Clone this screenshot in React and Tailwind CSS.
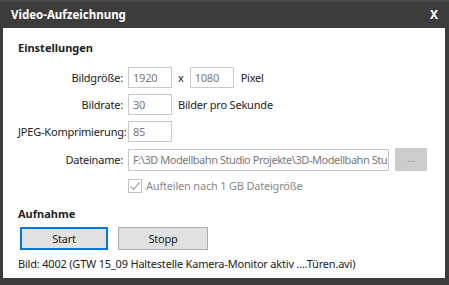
import React from "react";

const font = { fontFamily: '"Noto Sans", "Open Sans", sans-serif' };

function Input({ value, className = "" }) {
  return (
    <div
      className={`h-[21px] border border-[#c9c9c9] bg-white flex items-center pl-[4px] text-[#7a7a7a] overflow-hidden whitespace-nowrap ${className}`}
    >
      {value}
    </div>
  );
}

export default function App() {
  return (
    <div
      className="w-[449px] h-[285px] bg-[#3c3c3c] flex flex-col text-[11px] leading-[16px] tracking-[-0.2px]"
      style={font}
    >
      <div className="h-[2px] bg-[#4a4a4a]" />
      <div className="h-[26px] flex items-center justify-between pl-[11px] pr-[11px] text-white font-bold text-[11.5px] tracking-normal">
        <span>Video-Aufzeichnung</span>
        <span className="text-[12px]">X</span>
      </div>
      <div className="ml-[3px] mr-[4px] h-[250px] bg-white flex flex-col pl-[15px] pt-[12px] text-[#222]">
        <div className="font-bold h-[16px] tracking-normal">Einstellungen</div>
        <div className="mt-[11px] grid grid-cols-[105px_1fr] gap-x-[5px] gap-y-[6px] items-center whitespace-nowrap">
          <div className="text-right">Bildgröße:</div>
          <div className="flex items-center">
            <Input value="1920" className="w-[44px]" />
            <span className="ml-[6px] mr-[6px]">x</span>
            <Input value="1080" className="w-[44px]" />
            <span className="ml-[7px]">Pixel</span>
          </div>
          <div className="text-right">Bildrate:</div>
          <div className="flex items-center">
            <Input value="30" className="w-[44px]" />
            <span className="ml-[6px]">Bilder pro Sekunde</span>
          </div>
          <div className="text-right">JPEG-Komprimierung:</div>
          <div className="flex items-center">
            <Input value="85" className="w-[44px]" />
          </div>
          <div className="text-right">Dateiname:</div>
          <div className="flex items-center">
            <Input
              value="F:\3D Modellbahn Studio Projekte\3D-Modellbahn Stu"
              className="w-[261px] h-[22px] tracking-[-0.45px]"
            />
            <div className="ml-[6px] w-[32px] h-[23px] bg-[#cccccc] flex items-center justify-center text-[#9a9a9a] text-[11px] leading-none pb-[4px]">
              ...
            </div>
          </div>
          <div />
          <div className="flex items-center mt-[1px]">
            <div className="w-[14px] h-[14px] border border-[#c2c2c2] flex items-center justify-center">
              <svg width="12" height="12" viewBox="0 0 12 12">
                <path d="M1.5 6.5 L4.5 9.5 L10.5 2.5" fill="none" stroke="#a8a8a8" strokeWidth="1.2" />
              </svg>
            </div>
            <span className="ml-[4px] text-[#8a8a8a]">Aufteilen nach 1 GB Dateigröße</span>
          </div>
        </div>
        <div className="font-bold mt-[12px] h-[16px] tracking-normal">Aufnahme</div>
        <div className="flex mt-[5px] ml-[2px]">
          <button className="w-[88px] h-[23px] border-2 border-[#0078d7] bg-[#e1e1e1] flex items-center justify-center text-[#222]">
            Start
          </button>
          <button className="ml-[10px] w-[90px] h-[23px] border border-[#adadad] bg-[#e1e1e1] flex items-center justify-center text-[#222]">
            Stopp
          </button>
        </div>
        <div className="mt-[6px] whitespace-nowrap">
          Bild: 4002 (GTW 15_09 Haltestelle Kamera-Monitor aktiv ....Türen.avi)
        </div>
      </div>
    </div>
  );
}
